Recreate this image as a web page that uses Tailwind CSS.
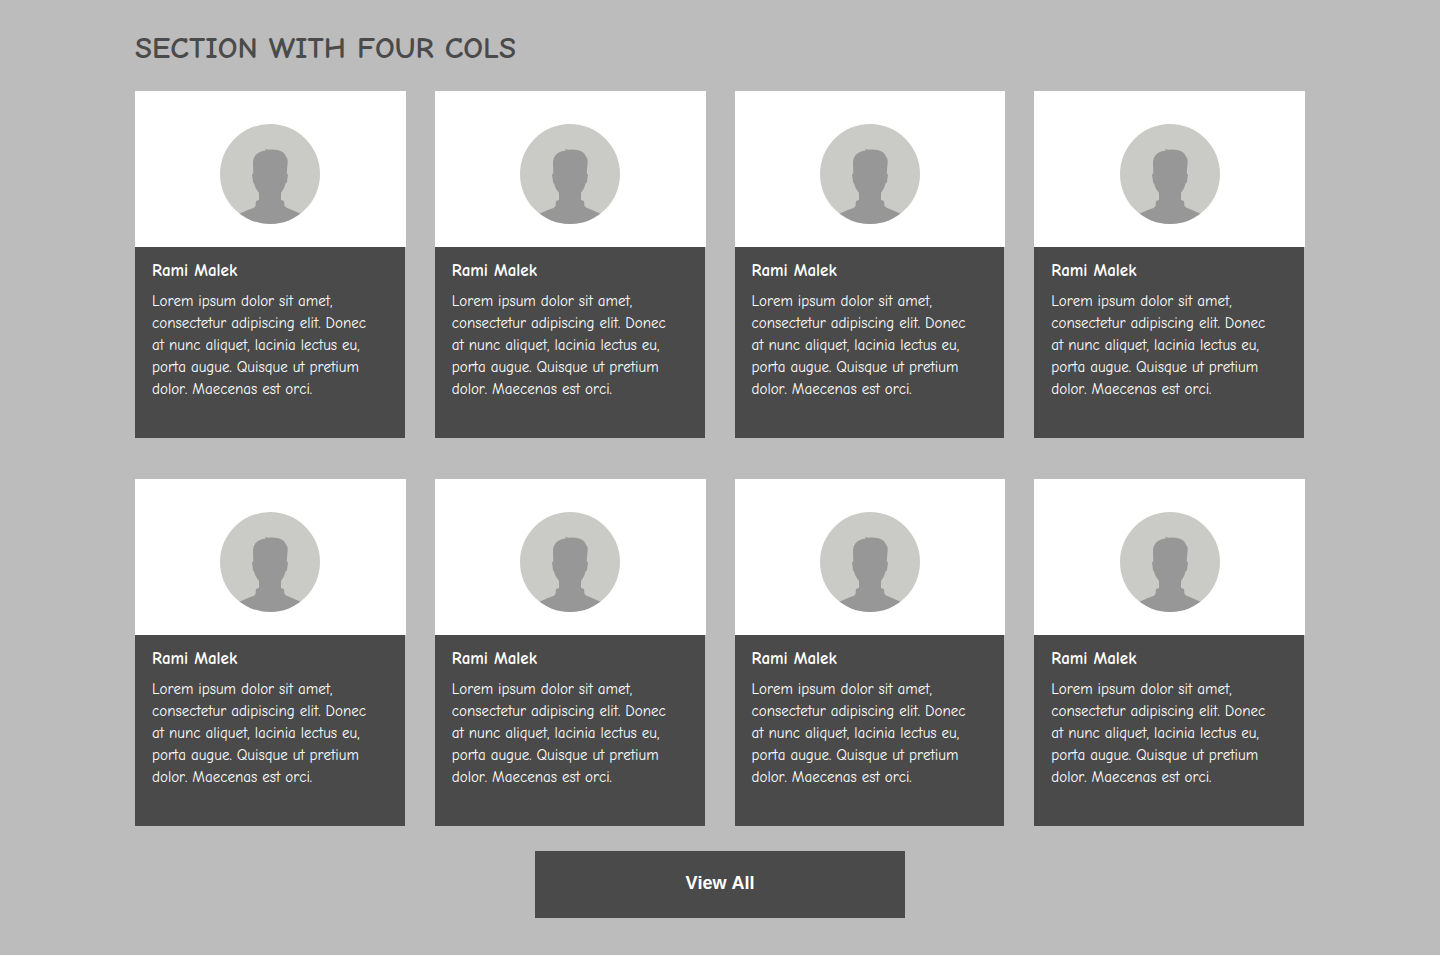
<!DOCTYPE html>
<html lang="en">
<head>
<meta charset="utf-8">
<meta name="viewport" content="width=device-width, initial-scale=1">
<title>Section with four cols</title>
<script src="https://cdn.jsdelivr.net/npm/@tailwindcss/browser@4"></script>
</head>
<body class="bg-white font-['Comic_Sans_MS','Comic_Neue','Open_Sans',sans-serif] [font-kerning:none] [font-variant-ligatures:none]">
<main class="bg-[#bcbcbc] px-6 pt-7 pb-[37px]">
  <section class="mx-auto max-w-[1170px]">
    <h2 class="mb-[23px] text-[31px] leading-10 font-bold text-[#4a4a4a]">SECTION WITH FOUR COLS</h2>
    <div id="cards" class="grid grid-cols-1 gap-x-[29px] gap-y-[41px] sm:grid-cols-2 lg:grid-cols-4"></div>
    <button type="button" class="mx-auto mt-[25px] block h-[67px] w-full max-w-[370px] bg-[#4a4a4a] pb-1 font-['Liberation_Sans',Arial,sans-serif] text-lg font-bold text-white">View All</button>
  </section>
</main>
<template id="card">
  <article>
    <div class="flex justify-center bg-white pt-[33px] pb-[23px]">
      <svg class="size-[100px] rounded-full bg-[#cacbc6]" viewBox="0 0 100 100" role="img" aria-label="Portrait placeholder">
        <path fill="#979797" d="M10 93 L20 89.500 L29 85.500 Q34.500 84 35.500 82 L36 77 L39 76 L39 69 L35.700 64.300 L34 59.500 Q33 59 33 57.700 L32 50.300 L33.300 49.500 L33 38 Q33 34 35.700 31 Q39 27 46 26.500 L45 24.800 L48 25.700 Q57 25 61 27.300 Q64.500 28.500 65.700 32 Q67.700 34 67.700 38 L66.700 49.500 L68 50.300 L67 57.700 Q67 59 65.500 59.500 L64 64.300 L61 69 L61 76 L64 77 L64.500 82 Q65.500 83.500 71 85.500 L80 89.500 L90 93 V105 H10 Z"/>
      </svg>
    </div>
    <div class="mr-px bg-[#4a4a4a] px-[17px] pt-3 pb-[38px] text-white">
      <h3 class="text-[17px] leading-6 font-bold">Rami Malek</h3>
      <p class="mt-[7px] text-[15px] leading-[22px] font-normal whitespace-nowrap">Lorem ipsum dolor sit amet,<br>consectetur adipiscing elit. Donec<br>at nunc aliquet, lacinia lectus eu,<br>porta augue. Quisque ut pretium<br>dolor. Maecenas est orci.</p>
    </div>
  </article>
</template>
<script>
  const grid = document.getElementById('cards');
  const card = document.getElementById('card');
  for (let i = 0; i < 8; i++) grid.append(card.content.cloneNode(true));
</script>
</body>
</html>
